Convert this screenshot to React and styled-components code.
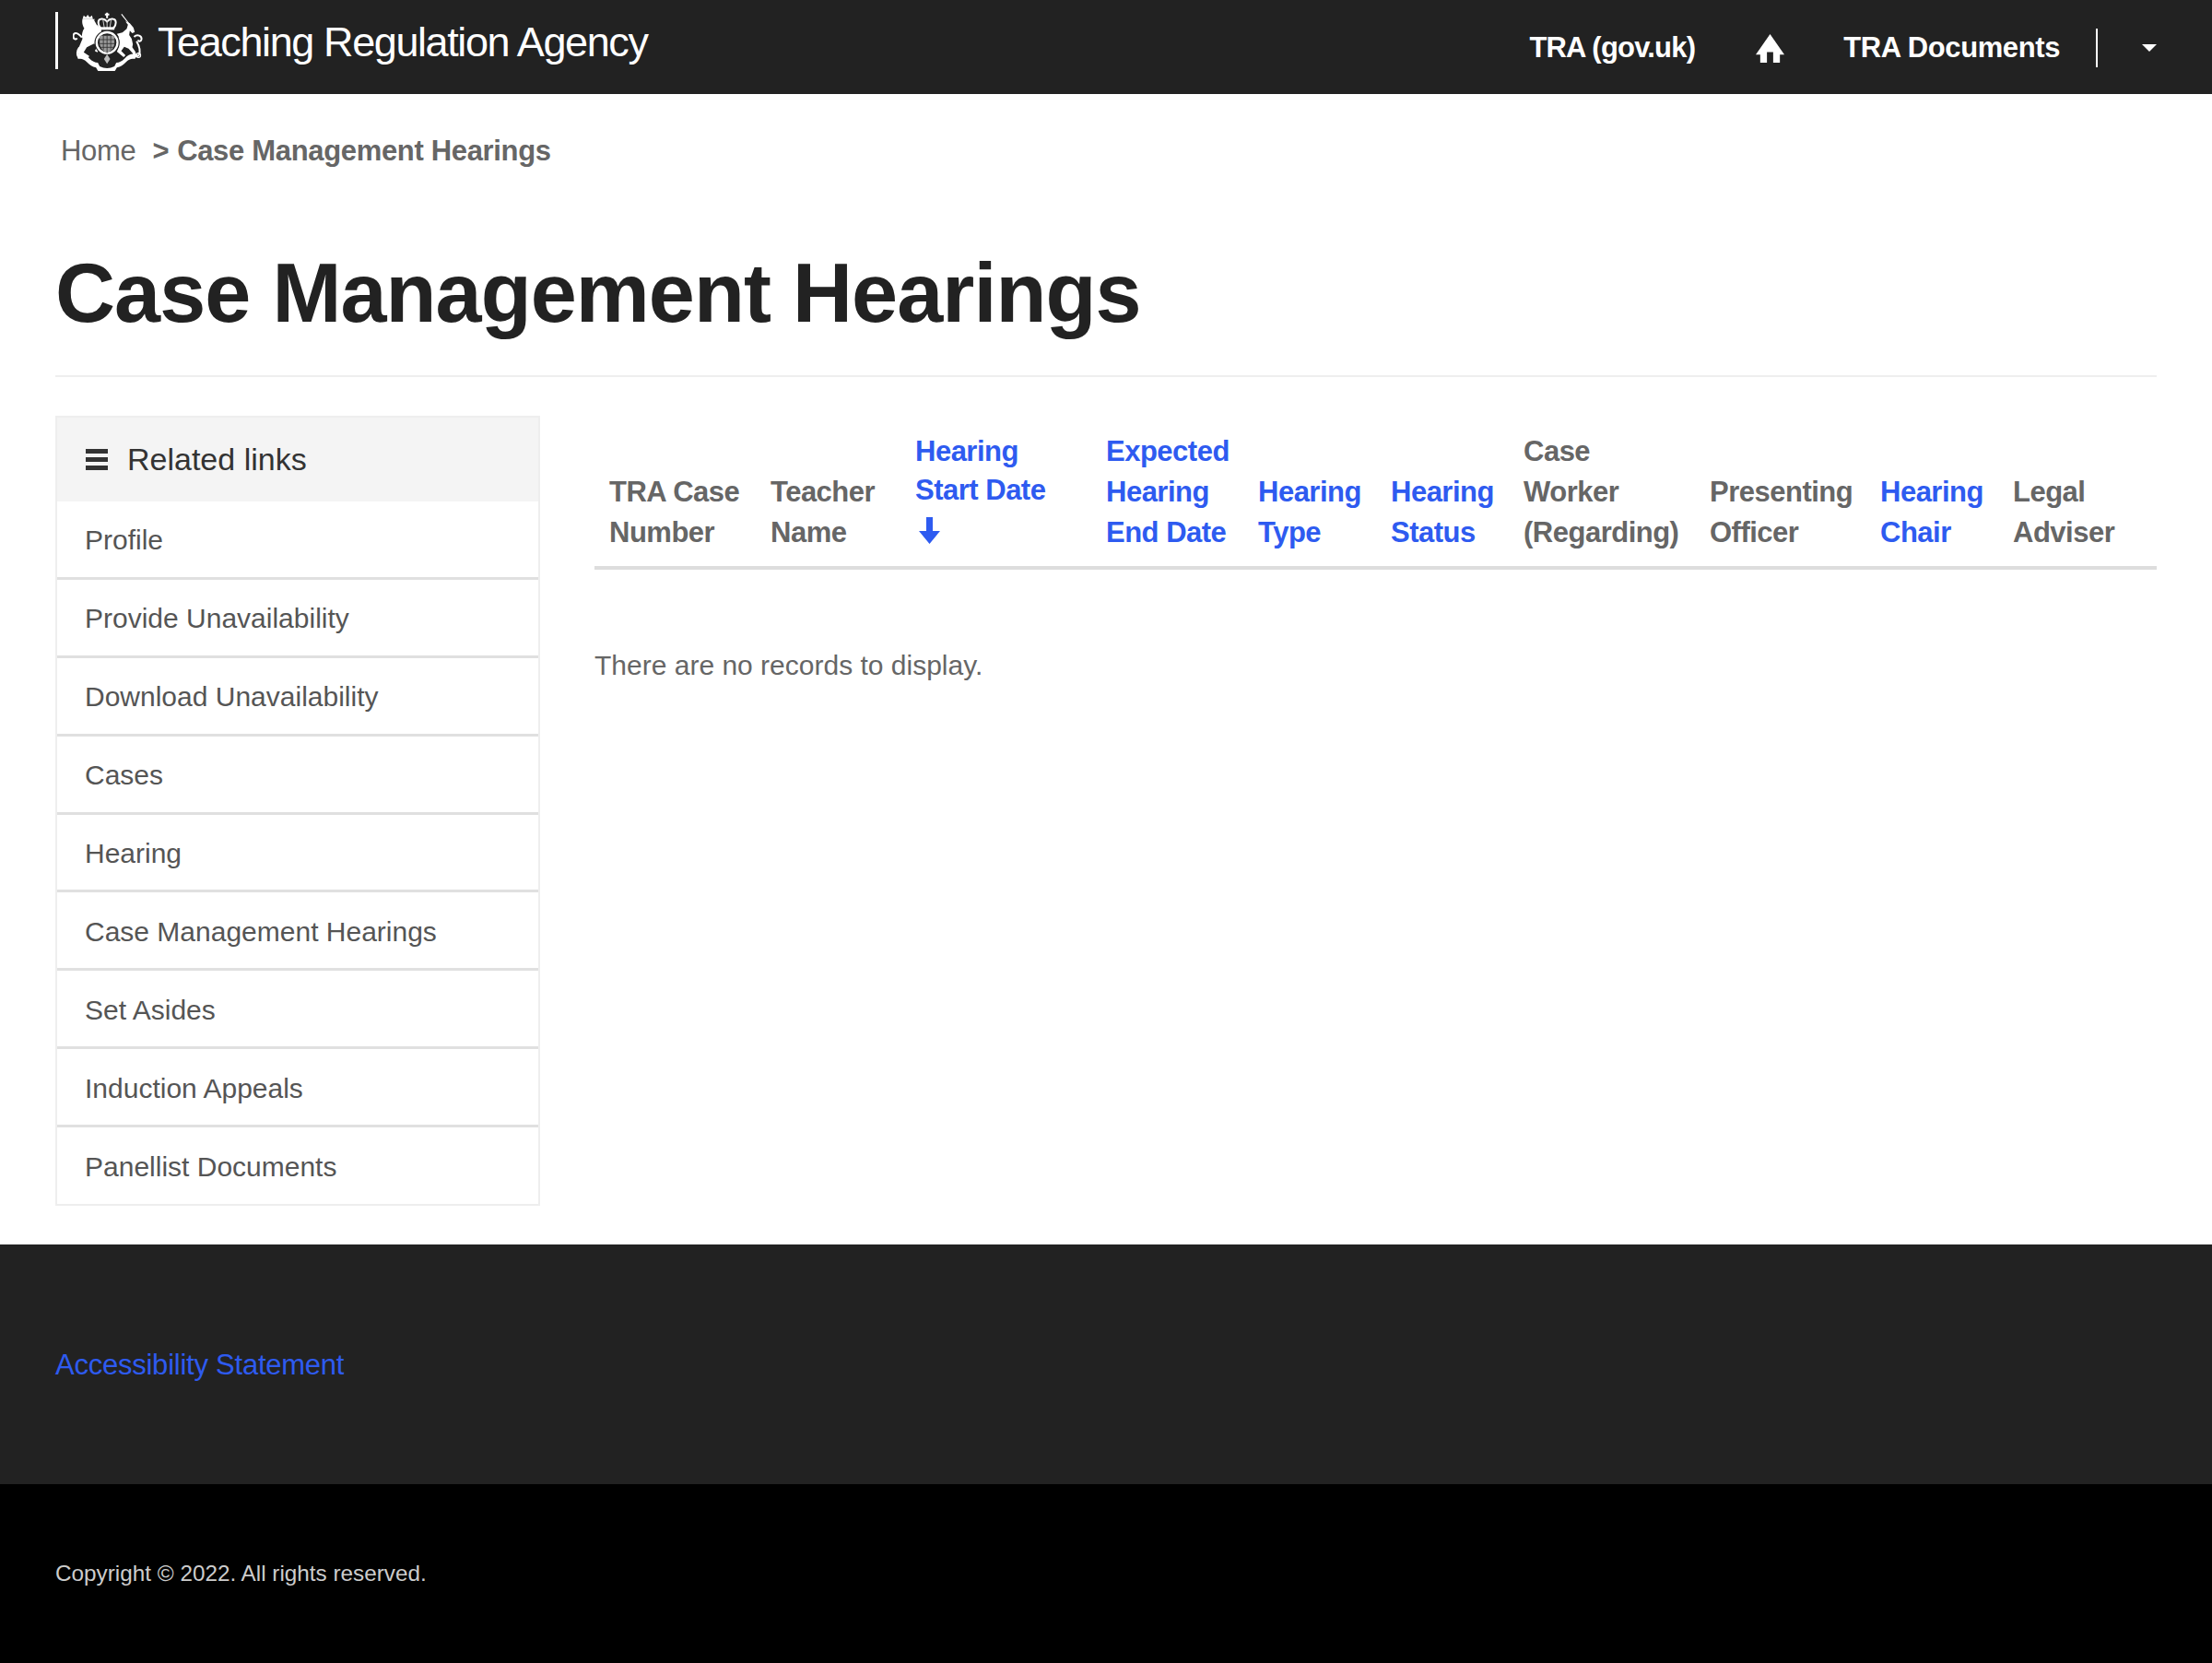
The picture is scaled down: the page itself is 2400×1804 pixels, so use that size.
import React from "react";
import styled, { createGlobalStyle } from "styled-components";

const links = [
  "Profile",
  "Provide Unavailability",
  "Download Unavailability",
  "Cases",
  "Hearing",
  "Case Management Hearings",
  "Set Asides",
  "Induction Appeals",
  "Panellist Documents",
];

const columns = [
  { width: 175, lines: ["TRA Case", "Number"] },
  { width: 157, lines: ["Teacher", "Name"] },
  { width: 207, lines: ["Hearing", "Start Date"], sortable: true, sorted: true },
  { width: 165, lines: ["Expected", "Hearing", "End Date"], sortable: true },
  { width: 144, lines: ["Hearing", "Type"], sortable: true },
  { width: 144, lines: ["Hearing", "Status"], sortable: true },
  { width: 202, lines: ["Case", "Worker", "(Regarding)"] },
  { width: 185, lines: ["Presenting", "Officer"] },
  { width: 144, lines: ["Hearing", "Chair"], sortable: true },
  { width: 172, lines: ["Legal", "Adviser"] },
];

function Crest() {
  return (
    <CrestSvg viewBox="57 35 230 192" aria-hidden="true">
      {/* crown */}
      <g fill="none" stroke="#fff">
        <path d="M168 37v18M161 43h14" strokeWidth="6" />
        <path d="M147 88c-10-12-10-28 0-30 8-2 16 2 21 8 5-6 13-10 21-8 10 2 10 18 0 30" strokeWidth="6" />
        <path d="M168 62v24M155 62l4 24M181 62l-4 24" strokeWidth="3" stroke="#ccc" />
      </g>
      <rect x="144" y="84" width="48" height="9" fill="#fff" />

      {/* lion */}
      <g fill="#fff">
        <path d="M88 58l4-12 7 6 6-8 6 8 8-6 3 12z" />
        <path d="M88 58c-3 12 2 24 6 30-6 8-10 22-6 34l-14 34c-4 10 0 18 8 22l24 8 4-8-18-12 10-16 24-12 10 10-8 14 8 4 14-20-4-22 8-10c-4-8-6-14-4-24l-16-14-8-14c2-4 2-4 4-4z" />
      </g>
      <path d="M86 118C72 100 58 100 58 114c0 10 10 12 12 6M78 150c-6 8-8 16-6 24" fill="none" stroke="#fff" strokeWidth="6" />

      {/* unicorn */}
      <path d="M215 42l25 32" fill="none" stroke="#fff" strokeWidth="3.500" />
      <g fill="#fff">
        <path d="M228 66l14 6 12 14 4 14-8 4-8-8-2 14 8 12 4 18-2 10 10 14 4 14-8 6-6-4 2-10-14-16-14-6-10 14 14 14-6 6-22-18 6-16-10-18 10-14-6-10 18-4 14-12 4-14-4-4z" />
      </g>
      <path d="M256 116c10-10 26-4 24 8-2 8-10 8-10 2M264 130c8 14 14 30 8 44-3 6-10 6-12 2" fill="none" stroke="#fff" strokeWidth="6" />
      <circle cx="270" cy="176" r="7" fill="none" stroke="#fff" strokeWidth="4" />

      {/* garter and shield */}
      <circle cx="168" cy="135" r="41" fill="#222" />
      <circle cx="168" cy="135" r="34" fill="none" stroke="#fff" strokeWidth="7" />
      <path d="M144 112h48v24c0 15-11 26-24 32-13-6-24-17-24-32z" fill="#999" />
      <path d="M168 112v56M144 138h48M156 112v46M180 112v46M144 125h48M146 150h44" stroke="#333" strokeWidth="2.500" />

      {/* motto ribbon */}
      <path d="M68 174c18-6 32 0 42 12 10 10 18 14 28 14l6 12c16 8 32 8 48 0l6-12c10 0 18-4 28-14 10-12 24-18 42-12l-10 14c-12-2-20 2-28 10-10 10-18 16-30 18l-6 10c-20 8-36 8-56 0l-6-10c-12-2-20-8-30-18-8-8-16-12-28-10z" fill="#fff" />
      <path d="M168 172l10 16-10 16-10-16z" fill="#bbb" />
    </CrestSvg>
  );
}

export default function App() {
  return (
    <>
      <GlobalStyle />
      <Header>
        <Brand>
          <Crest />
          <BrandName>Teaching Regulation Agency</BrandName>
        </Brand>
        <Nav>
          <NavLink href="#" $tight>
            TRA (gov.uk)
          </NavLink>
          <HomeLink href="#" aria-label="Home">
            <svg viewBox="0 0 32 32" fill="currentColor">
              <path d="M16 0l16 23h-5v9h-7.500V20h-7v12H5v-9H0z" />
            </svg>
          </HomeLink>
          <NavLink href="#">TRA Documents</NavLink>
          <UserMenu>
            <Caret />
          </UserMenu>
        </Nav>
      </Header>

      <Breadcrumbs>
        <Crumb href="#">Home</Crumb>
        <CrumbSep>&gt;</CrumbSep>
        <CrumbCurrent>Case Management Hearings</CrumbCurrent>
      </Breadcrumbs>

      <PageTitle>Case Management Hearings</PageTitle>

      <Content>
        <Sidebar>
          <SidebarHead>
            <svg viewBox="0 0 24 23" width="24" height="23" fill="currentColor">
              <rect y="0" width="24" height="5" />
              <rect y="9" width="24" height="5" />
              <rect y="18" width="24" height="5" />
            </svg>
            <span>Related links</span>
          </SidebarHead>
          {links.map((link) => (
            <SidebarLink href="#" key={link}>
              {link}
            </SidebarLink>
          ))}
        </Sidebar>

        <Main>
          <Table>
            <colgroup>
              {columns.map((col) => (
                <col key={col.lines.join(" ")} width={col.width} />
              ))}
            </colgroup>
            <thead>
              <tr>
                {columns.map((col) => (
                  <Th key={col.lines.join(" ")} $sortable={col.sortable} $sorted={col.sorted}>
                    {col.lines.map((line) => (
                      <HeadLine key={line} $sorted={col.sorted}>
                        {line}
                      </HeadLine>
                    ))}
                    {col.sorted && (
                      <SortArrow>
                        <svg viewBox="0 0 23 29" width="23" height="29" fill="currentColor">
                          <path d="M8 0h7v15h8L11.500 29 0 15h8z" />
                        </svg>
                      </SortArrow>
                    )}
                  </Th>
                ))}
              </tr>
            </thead>
          </Table>
          <NoRecords>There are no records to display.</NoRecords>
        </Main>
      </Content>

      <Footer>
        <FooterLink href="#">Accessibility Statement</FooterLink>
      </Footer>
      <Copyright>Copyright © 2022. All rights reserved.</Copyright>
    </>
  );
}

const GlobalStyle = createGlobalStyle`
  * {
    box-sizing: border-box;
  }
  body {
    margin: 0;
    background: #fff;
    font-family: "Liberation Sans", Arial, sans-serif;
    color: #666;
  }
  a {
    text-decoration: none;
  }
`;

const Header = styled.header`
  height: 102px;
  background: #222;
  display: flex;
  justify-content: space-between;
  padding: 0 60px;
`;

const Brand = styled.div`
  display: flex;
  align-items: flex-start;
  height: 62px;
  margin-top: 13px;
  padding-left: 16px;
  border-left: 3px solid #fff;
`;

const CrestSvg = styled.svg`
  width: 77px;
  height: 64px;
  flex: none;
`;

const BrandName = styled.div`
  color: #fff;
  font-size: 45px;
  line-height: 54px;
  letter-spacing: -1.4px;
  margin: 6px 0 0 15px;
`;

const Nav = styled.nav`
  display: flex;
  align-items: center;
  padding-top: 2px;
`;

const NavLink = styled.a`
  color: #fff;
  font-size: 31px;
  font-weight: 700;
  letter-spacing: ${({ $tight }) => ($tight ? "-0.8px" : "-0.4px")};
`;

const HomeLink = styled.a`
  color: #fff;
  display: flex;
  margin: 0 64px 0 66px;
  svg {
    width: 31px;
    height: 31px;
  }
`;

const UserMenu = styled.div`
  display: flex;
  align-items: center;
  height: 42px;
  margin-left: 39px;
  padding: 0 0 0 48px;
  border-left: 2px solid #fff;
`;

const Caret = styled.span`
  width: 0;
  height: 0;
  border-left: 8px solid transparent;
  border-right: 8px solid transparent;
  border-top: 8px solid #fff;
`;

const Breadcrumbs = styled.div`
  display: flex;
  align-items: baseline;
  padding: 42px 66px 0;
  font-size: 31px;
  line-height: 40px;
  letter-spacing: -0.33px;
`;

const Crumb = styled.a`
  color: #666;
`;

const CrumbSep = styled.span`
  font-weight: 700;
  margin: 0 9px 0 18px;
`;

const CrumbCurrent = styled.span`
  font-weight: 700;
`;

const PageTitle = styled.h1`
  margin: 82px 60px 0;
  padding-bottom: 37px;
  border-bottom: 2px solid #eee;
  font-size: 90px;
  line-height: 104px;
  font-weight: 700;
  letter-spacing: -0.95px;
  color: #222;
`;

const Content = styled.div`
  display: flex;
  align-items: flex-start;
  padding: 42px 60px;
`;

const Sidebar = styled.aside`
  width: 526px;
  flex: none;
  border: 2px solid #eee;
  border-bottom-width: 1px;
`;

const SidebarHead = styled.div`
  display: flex;
  align-items: center;
  gap: 21px;
  height: 91px;
  padding: 0 31px;
  background: #f4f4f4;
  color: #333;
  font-size: 34px;
`;

const SidebarLink = styled.a`
  display: flex;
  align-items: center;
  height: 84.900px;
  padding: 3px 30px 0;
  border-bottom: 3px solid #e0e0e0;
  color: #555;
  font-size: 30px;
  &:last-child {
    height: 84px;
    border-bottom: 1px solid #eee;
  }
`;

const Main = styled.main`
  flex: 1;
  min-width: 0;
  margin-left: 59px;
`;

const Table = styled.table`
  width: 100%;
  table-layout: fixed;
  border-collapse: collapse;
`;

const Th = styled.th`
  vertical-align: bottom;
  text-align: left;
  padding: ${({ $sorted }) => ($sorted ? "14px 16px 17px" : "17px 16px 14px")};
  border-bottom: 4px solid #ddd;
  color: ${({ $sortable }) => ($sortable ? "#2e5bf0" : "#666")};
  font-size: 31px;
  font-weight: 700;
  letter-spacing: -0.5px;
  line-height: 44px;
`;

const HeadLine = styled.div`
  white-space: nowrap;
  line-height: ${({ $sorted }) => ($sorted ? "42px" : "44px")};
`;

const SortArrow = styled.div`
  display: flex;
  align-items: center;
  height: 44px;
  padding-left: 4px;
`;

const NoRecords = styled.p`
  margin: 84px 0 0;
  font-size: 30px;
  line-height: 40px;
`;

const Footer = styled.footer`
  height: 260px;
  background: #222;
  padding: 111px 60px 0;
`;

const FooterLink = styled.a`
  color: #2e5bf0;
  font-size: 31px;
  line-height: 40px;
  letter-spacing: -0.24px;
`;

const Copyright = styled.div`
  height: 195px;
  background: #000;
  color: #ccc;
  font-size: 24.300px;
  padding: 83px 60px 0;
`;
